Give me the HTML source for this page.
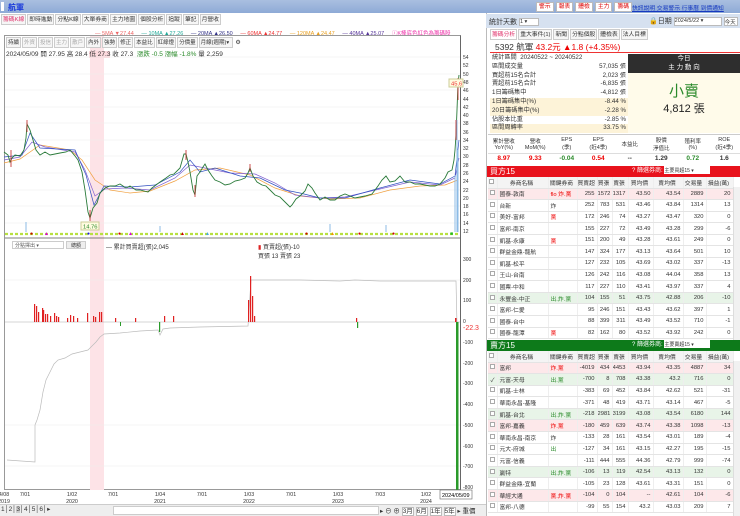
<!DOCTYPE html>
<html><head><meta charset="utf-8">
<style>
*{box-sizing:border-box;margin:0;padding:0}
body{width:740px;height:516px;overflow:hidden;background:#fff;font-family:"Liberation Sans","Noto Sans CJK TC",sans-serif;font-size:7px;color:#333;position:relative}
.abs{position:absolute}
.topbar{left:0;top:0;width:740px;height:13px;background:linear-gradient(#a9bfe0,#8eaad6)}
.tabs span{display:inline-block;border:1px solid #ccc;background:#f6f6f6;padding:1px 1px;margin-right:1px;font-size:5.8px;height:11px;line-height:8px}
.btn{display:inline-block;background:#fff;border:1px solid #bbb;color:#d00;font-size:5.8px;padding:0 2px;height:10px;line-height:9px;margin-right:2px}
table{border-collapse:collapse;table-layout:fixed}
.bt td{height:11.6px;border-bottom:1px solid #e4e4e4;border-right:1px solid #eee;font-size:5.8px;text-align:right;padding-right:2px;white-space:nowrap;overflow:hidden}
.bt td.n{text-align:left;padding-left:2px}
.bt tr.h td{background:#f4f4f4;text-align:center;height:11px}
.bt tr.pk td{background:#fde8ea}
.bt tr.gr td{background:#e8f4e8}
.cb{display:inline-block;width:5px;height:5px;border:1px solid #aaa;background:#fff}
.r{color:#e00}.g{color:#2a8a2a}
.st div{height:8.8px;line-height:8.8px;font-size:6.2px;padding:0 2px;display:flex;justify-content:space-between}
</style></head><body>
<div class="abs topbar"></div>
<div class="abs" style="left:1px;top:2px;width:3px;height:9px;background:#fff"></div>
<div class="abs" style="left:8px;top:2px;font-size:8px;color:#1a3adb;font-weight:bold">航軍</div>
<div class="abs" style="left:536px;top:2px;white-space:nowrap"><span class="btn">警示</span><span class="btn">報表</span><span class="btn">體檢</span><span class="btn">主力</span><span class="btn">籌碼</span></div>
<div class="abs" style="left:632px;top:3px;font-size:5.8px;color:#1538c0;text-decoration:underline;white-space:nowrap">快訊說明 交易警示 行事曆 到價通知</div>

<div class="abs tabs" style="left:1px;top:14px;white-space:nowrap"><span style="color:#e0306a">籌碼K線</span><span>即時進動</span><span>分點K線</span><span>大單券商</span><span>主力地圖</span><span>個股分析</span><span>追蹤</span><span>筆記</span><span>月營收</span></div>

<div class="abs" style="left:95px;top:29px;font-size:5.5px;white-space:nowrap;color:#333">
<span style="color:#e66">— 5MA ▼27.44</span>&nbsp;&nbsp;&nbsp;&nbsp;&nbsp;<span style="color:#2a9">— 10MA ▲27.26</span>&nbsp;&nbsp;&nbsp;&nbsp;&nbsp;<span style="color:#338">— 20MA ▲26.50</span>&nbsp;&nbsp;&nbsp;&nbsp;&nbsp;<span style="color:#e33">— 60MA ▲24.77</span>&nbsp;&nbsp;&nbsp;&nbsp;&nbsp;<span style="color:#e9a020">— 120MA ▲24.47</span>&nbsp;&nbsp;&nbsp;&nbsp;&nbsp;<span style="color:#539">— 40MA ▲25.07</span>&nbsp;&nbsp;&nbsp;&nbsp;&nbsp;<span style="color:#e3a">ⓘK棒底色紅色為籌碼股</span></div>

<div class="abs" style="left:4px;top:35px;width:457px;height:455px;border:1px solid #999;border-right:1px solid #666"></div>
<div class="abs" style="left:90px;top:36px;width:14px;height:454px;background:#fde3e7"></div>
<div class="abs tabs" style="left:6px;top:37px;white-space:nowrap;font-size:6px"><span style="font-size:5.5px">持續</span><span style="font-size:5.5px;color:#aaa">外資</span><span style="font-size:5.5px;color:#aaa">投信</span><span style="font-size:5.5px;color:#aaa">主力</span><span style="font-size:5.5px;color:#aaa">散戶</span><span style="font-size:5.5px">內外</span><span style="font-size:5.5px">強勢</span><span style="font-size:5.5px">修正</span><span style="font-size:5.5px">本益比</span><span style="font-size:5.5px">紅綠燈</span><span style="font-size:5.5px">分價量</span><span style="font-size:5.5px;width:34px">月線(週期)▾</span> ⚙</div>
<div class="abs" style="left:6px;top:48px;font-size:6.5px;white-space:nowrap">2024/05/09 開 27.95 高 28.4 <span style="background:#fcd9dd">低 27.3</span> 收 27.3 &nbsp;<span class="g">漲跌 -0.5 漲幅 -1.8%</span> 量 2,259</div>

<svg class="abs" style="left:0;top:0" width="486" height="516">
<g stroke="#eee" stroke-width="0.6">
<line x1="5" y1="57" x2="460" y2="57"/><line x1="5" y1="74" x2="460" y2="74"/><line x1="5" y1="90" x2="460" y2="90"/><line x1="5" y1="107" x2="460" y2="107"/><line x1="5" y1="123" x2="460" y2="123"/><line x1="5" y1="140" x2="460" y2="140"/><line x1="5" y1="156" x2="460" y2="156"/><line x1="5" y1="173" x2="460" y2="173"/><line x1="5" y1="190" x2="460" y2="190"/><line x1="5" y1="206" x2="460" y2="206"/><line x1="5" y1="223" x2="460" y2="223"/>
<line x1="5" y1="280" x2="460" y2="280"/><line x1="5" y1="425" x2="460" y2="425"/><line x1="5" y1="466" x2="460" y2="466"/>
</g>
<g font-size="5" fill="#333">
<text x="463" y="59">54</text><text x="463" y="67">52</text><text x="463" y="76">50</text><text x="463" y="84">48</text><text x="463" y="92">46</text><text x="463" y="101">44</text><text x="463" y="109">42</text><text x="463" y="117">40</text><text x="463" y="125">38</text><text x="463" y="134">36</text><text x="463" y="142">34</text><text x="463" y="150">32</text><text x="463" y="158">30</text><text x="463" y="167">28</text><text x="463" y="175">26</text><text x="463" y="183">24</text><text x="463" y="192">22</text><text x="463" y="200">20</text><text x="463" y="208">18</text><text x="463" y="216">16</text><text x="463" y="225">14</text><text x="463" y="233">12</text>
<text x="463" y="261">300</text><text x="463" y="282">200</text><text x="463" y="302">100</text><text x="463" y="323">0</text><text x="463" y="344">-100</text><text x="463" y="365">-200</text><text x="463" y="385">-300</text><text x="463" y="406">-400</text><text x="463" y="427">-500</text><text x="463" y="448">-600</text><text x="463" y="468">-700</text><text x="463" y="489">-800</text>
</g>
<polyline fill="none" stroke="#f0a040" stroke-width="0.7" points="4,163 20,159 40,145 70,150 82,160 95,180 110,190 130,193 150,191 175,181 195,170 220,168 250,175 275,188 300,196 330,199 360,198 390,190 420,186 445,185 458,180"/>
<polyline fill="none" stroke="#8060d0" stroke-width="0.7" points="4,160 20,157 32,142 45,147 75,152 85,170 95,196 105,189 125,188 150,190 175,178 190,165 205,168 230,173 255,174 275,183 295,195 320,198 345,197 380,189 410,182 440,185 455,178 459,158"/>
<polyline fill="none" stroke="#3050c0" stroke-width="0.7" points="4,157 22,155 30,133 40,148 75,150 86,175 94,205 104,186 130,187 155,185 180,172 190,160 200,172 215,168 240,176 260,178 285,190 300,193 320,198 345,198 380,188 410,180 440,184 455,176 459,140"/>
<polyline fill="none" stroke="#2a7a3a" stroke-width="0.9" points="4,152 8,155 10,162 12,158 15,155 20,156 24,150 26,138 27,124 30,130 33,140 36,150 40,155 45,152 50,155 55,154 60,153 66,152 70,150 75,156 78,160 82,172 85,190 88,212 90,218 93,208 97,203 100,193 105,188 110,186 115,186 120,184 126,188 130,186 136,190 140,190 148,192 152,188 156,185 160,182 166,178 170,175 174,174 180,168 184,154 186,154 188,162 190,172 193,190 195,195 197,176 200,172 203,167 205,164 208,170 212,176 215,180 220,182 225,185 230,184 235,181 240,180 245,178 248,173 250,168 253,176 257,182 262,185 266,186 270,190 275,195 280,197 285,202 290,207 292,205 296,199 300,196 305,191 308,184 312,188 315,193 320,200 325,197 330,200 335,200 340,196 345,194 350,196 355,198 360,197 365,196 372,194 378,186 382,180 386,176 390,182 395,181 400,176 405,182 410,182 415,184 420,184 425,185 430,186 435,186 440,184 445,178 448,172 452,170 454,160 455,150 456,135 457,110 458,84 459,75"/>
<g stroke="#c02020" stroke-width="0.8">
<line x1="11" y1="150" x2="11" y2="167"/><line x1="27" y1="120" x2="27" y2="132"/><line x1="90" y1="210" x2="90" y2="221"/><line x1="186" y1="150" x2="186" y2="160"/><line x1="195" y1="185" x2="195" y2="197"/><line x1="250" y1="164" x2="250" y2="172"/><line x1="456" y1="120" x2="456" y2="140"/><line x1="458" y1="78" x2="458" y2="100"/>
</g>
<rect x="81" y="222" width="18" height="8" fill="#fffbe0" stroke="#cc9"/><text x="83" y="228.5" font-size="5.8" fill="#2a8a2a">14.76</text>
<rect x="449" y="79" width="14" height="8" fill="#fffbe0" stroke="#cc9"/><text x="451" y="85.5" font-size="5.8" fill="#e33">45.6</text>
<g stroke="#8cbbe6" stroke-width="1"><line x1="26" y1="232" x2="26" y2="222"/><line x1="160" y1="232" x2="160" y2="226"/><line x1="330" y1="232" x2="330" y2="224"/><line x1="386" y1="232" x2="386" y2="225"/><line x1="455" y1="232" x2="455" y2="175"/><line x1="457" y1="232" x2="457" y2="120"/><line x1="458" y1="232" x2="458" y2="150"/></g>
<line x1="5" y1="234" x2="460" y2="234" stroke="#b8e040" stroke-width="2.2" stroke-dasharray="3,2"/>
<g font-size="5"><text x="30" y="235" fill="#c00">●</text><text x="44" y="235" fill="#d0d">▲</text><text x="87" y="235" fill="#22c">●</text><text x="118" y="235" fill="#c00">●</text><text x="128" y="235" fill="#d0d">▲</text><text x="180" y="235" fill="#c00">▲</text><text x="205" y="235" fill="#4ad">▲</text><text x="305" y="235" fill="#c00">●</text><text x="330" y="235" fill="#e90">▲</text><text x="358" y="235" fill="#c00">●</text><text x="392" y="235" fill="#c00">●</text><text x="450" y="235" fill="#2b2">■</text></g>
<line x1="5" y1="238" x2="460" y2="238" stroke="#555" stroke-width="0.8"/>
<line x1="5" y1="322" x2="460" y2="322" stroke="#aaa" stroke-width="0.6"/>
<polyline fill="none" stroke="#bbb" stroke-width="0.7" points="7,460 35,462 35,425 37,420 40,410 43,392 46,380 50,372 54,364 58,360 65,358 72,354 80,352 88,350 92,346 96,342 100,337 104,334 120,333 140,331 158,330 160,335 163,329 170,328 200,327 248,326 251,280 255,280 300,280 340,281 355,280 380,281 440,281 456,281 457,326"/>
<g fill="#e02020">
<rect x="34" y="304" width="1.2" height="18"/><rect x="36" y="306" width="1.2" height="16"/><rect x="38" y="312" width="1.2" height="10"/><rect x="42" y="308" width="1.2" height="14"/><rect x="43" y="310" width="1.2" height="12"/><rect x="45" y="314" width="1.2" height="8"/><rect x="47" y="314" width="1.2" height="8"/><rect x="50" y="316" width="1.2" height="6"/><rect x="54" y="313" width="1.2" height="9"/><rect x="56" y="316" width="1.2" height="6"/><rect x="58" y="317" width="1.2" height="5"/><rect x="67" y="318" width="1.2" height="4"/><rect x="70" y="315" width="1.2" height="7"/><rect x="73" y="316" width="1.2" height="6"/><rect x="77" y="318" width="1.2" height="4"/><rect x="87" y="313" width="1.2" height="9"/><rect x="93" y="316" width="1.2" height="6"/><rect x="95" y="317" width="1.2" height="5"/><rect x="99" y="312" width="1.2" height="10"/><rect x="101" y="312" width="1.2" height="10"/><rect x="115" y="318" width="1.2" height="4"/><rect x="135" y="318" width="1.2" height="4"/><rect x="164" y="316" width="1.2" height="6"/><rect x="173" y="316" width="1.2" height="6"/><rect x="248" y="300" width="1.2" height="22"/><rect x="250" y="276" width="1.2" height="46"/><rect x="252" y="296" width="1.2" height="26"/><rect x="254" y="316" width="1.2" height="6"/><rect x="356" y="318" width="1.2" height="4"/><rect x="455" y="318" width="1.5" height="4"/></g>
<g fill="#2a9a2a"><rect x="120" y="322" width="1" height="4"/><rect x="159" y="322" width="1.2" height="10"/><rect x="357" y="322" width="1.2" height="6"/><rect x="456" y="322" width="2.5" height="168"/></g>
<text x="463" y="330" font-size="7" fill="#e33">-22.3</text>
<g font-size="5.3" fill="#333" text-anchor="middle"><text x="4" y="496">4/08</text><text x="4" y="503">2019</text><text x="25" y="496">7/01</text><text x="72" y="496">1/02</text><text x="72" y="503">2020</text><text x="113" y="496">7/01</text><text x="160" y="496">1/04</text><text x="160" y="503">2021</text><text x="202" y="496">7/01</text><text x="249" y="496">1/03</text><text x="249" y="503">2022</text><text x="291" y="496">7/01</text><text x="338" y="496">1/03</text><text x="338" y="503">2023</text><text x="380" y="496">7/03</text><text x="426" y="496">1/02</text><text x="426" y="503">2024</text></g>
<rect x="440" y="490" width="32" height="9" fill="#fff" stroke="#666" stroke-width="0.6"/><text x="442" y="497" font-size="5.5">2024/05/09</text>
</svg>
<div class="abs" style="left:12px;top:241px;width:52px;height:8px;border:1px solid #ccc;font-size:5px;color:#555;padding-left:2px">分點擇出 ▾</div>
<div class="abs" style="left:66px;top:241px;width:20px;height:8px;border:1px solid #ccc;background:#eee;font-size:5px;text-align:center">總額</div>
<div class="abs" style="left:106px;top:242px;font-size:6px">— 累計買賣超(張)2,045</div>
<div class="abs" style="left:258px;top:242px;font-size:6px"><span style="color:#d22">▮</span> 買賣超(張)-10<br>買張 13 賣張 23</div>

<div class="abs" style="left:0;top:504px;width:486px;height:12px;background:#eee;border-top:1px solid #ccc"></div>
<div class="abs" style="left:1px;top:505px;font-size:6.5px;white-space:nowrap">1│2│<span style="background:#ccc">3</span>│4│5│6│▸</div>
<div class="abs" style="left:113px;top:506px;width:266px;height:9px;background:#fff;border:1px solid #ccc"></div>
<div class="abs" style="left:380px;top:505px;font-size:6.5px;white-space:nowrap">▸ ⊖ ⊕ <span style="border:1px solid #bbb;background:#fff">3月</span> <span style="border:1px solid #bbb;background:#fff">6月</span> <span style="border:1px solid #bbb;background:#fff">1年</span> <span style="border:1px solid #bbb;background:#fff">5年</span> ▸ 重價</div>

<div class="abs" style="left:486px;top:13px;width:254px;height:503px;border-left:1px solid #bbb"></div>
<div class="abs" style="left:486px;top:14px;width:254px;height:14px;background:#d6e1f0"></div>
<div class="abs" style="left:489px;top:17px;font-size:7px;white-space:nowrap">統計天數 <span style="display:inline-block;width:20px;height:8px;background:#fff;border:1px solid #bbb;font-size:5.5px;vertical-align:middle">1 ▾</span></div>
<div class="abs" style="left:649px;top:16px;font-size:7px;white-space:nowrap">🔒日期 <span style="display:inline-block;width:48px;height:9px;background:#fff;border:1px solid #bbb;font-size:5.5px;vertical-align:middle">2024/5/22 ▾</span> <span style="display:inline-block;width:14px;height:9px;background:#fff;border:1px solid #bbb;font-size:5.5px;vertical-align:middle">今天</span></div>
<div class="abs tabs" style="left:490px;top:29px;white-space:nowrap"><span style="color:#e0306a;background:#fff">籌碼分析</span><span>重大事件(1)</span><span>新聞</span><span>分點個股</span><span>體檢表</span><span>法人目標</span></div>
<div class="abs" style="left:490px;top:41px;width:250px;height:12px;border-bottom:1px solid #e33;font-size:8.5px;white-space:nowrap;padding-left:5px">5392 航軍 <span class="r">43.2元 ▲1.8 (+4.35%)</span></div>
<div class="abs st" style="left:490px;top:54px;width:138px">
<div><span>統計區間 &nbsp;20240522 ~ 20240522</span></div>
<div><span>區間成交量</span><span>57,035 張</span></div>
<div><span>買超前15名合計</span><span>2,023 張</span></div>
<div><span>賣超前15名合計</span><span>-6,835 張</span></div>
<div><span>1日籌碼集中</span><span>-4,812 張</span></div>
<div style="background:#fdf3d8"><span>1日籌碼集中(%)</span><span>-8.44 %</span></div>
<div style="background:#fdf3d8"><span>20日籌碼集中(%)</span><span>-2.28 %</span></div>
<div><span>佔股本比重</span><span>-2.85 %</span></div>
<div style="background:#fdf3d8"><span>區間周轉率</span><span>33.75 %</span></div>
</div>
<div class="abs" style="left:628px;top:54px;width:112px;height:19px;background:#2e2e2e;color:#fff;font-size:6.5px;text-align:center;line-height:9px">今日<br>主 力 動 向</div>
<div class="abs" style="left:628px;top:73px;width:112px;height:60px;background:#fffbea;text-align:center"><div style="font-size:15px;color:#2a8a2a;margin-top:11px;line-height:16px">小賣</div><div style="font-size:11px;color:#222">4,812 張</div></div>
<table class="abs" style="left:488px;top:134px;width:252px;font-size:5.5px;text-align:center">
<tr style="height:19px;border-top:1px solid #ccc;border-bottom:1px solid #ddd"><td>累計營收<br>YoY(%)</td><td>營收<br>MoM(%)</td><td>EPS<br>(季)</td><td>EPS<br>(近4季)</td><td>本益比</td><td>股價<br>淨值比</td><td>殖利率<br>(%)</td><td>ROE<br>(近4季)</td></tr>
<tr style="height:10px;font-size:6.5px;font-weight:bold"><td class="r">8.97</td><td class="r">9.33</td><td class="g">-0.04</td><td class="r">0.54</td><td>--</td><td>1.29</td><td class="g">0.72</td><td>1.6</td></tr>
</table>

<div class="abs" style="left:487px;top:166px;width:253px;height:11px;background:#e8121c;color:#fff;font-size:8px;line-height:11px;padding-left:3px">買方15<span style="position:absolute;left:145px;font-size:6px">? 篩選券商: <span style="display:inline-block;width:46px;height:8px;background:#fff;color:#333;font-size:5px;vertical-align:middle">主要買超15 ▾</span></span></div>
<table class="abs bt" style="left:488px;top:177px;width:245px">
<colgroup><col style="width:9px"><col style="width:51px"><col style="width:29px"><col style="width:20px"><col style="width:15px"><col style="width:16px"><col style="width:25px"><col style="width:30px"><col style="width:23px"><col style="width:27px"></colgroup>
<tr class="h"><td><span class="cb"></span></td><td>券商名稱</td><td>關鍵券商</td><td>買賣超</td><td>買張</td><td>賣張</td><td>買均價</td><td>賣均價</td><td>交易量</td><td>損益(萬)</td></tr>
<tr class="pk"><td><span class="cb"></span></td><td class="n">國泰-敦南</td><td class="n r">flo 炸.黨</td><td>255</td><td>1572</td><td>1317</td><td>43.50</td><td>43.54</td><td>2889</td><td>20</td></tr>
<tr><td><span class="cb"></span></td><td class="n">台新</td><td class="n">炸</td><td>252</td><td>783</td><td>531</td><td>43.46</td><td>43.84</td><td>1314</td><td>13</td></tr>
<tr><td><span class="cb"></span></td><td class="n">美好-富邦</td><td class="n r">黨</td><td>172</td><td>246</td><td>74</td><td>43.27</td><td>43.47</td><td>320</td><td>0</td></tr>
<tr><td><span class="cb"></span></td><td class="n">富邦-南京</td><td></td><td>155</td><td>227</td><td>72</td><td>43.49</td><td>43.28</td><td>299</td><td>-6</td></tr>
<tr><td><span class="cb"></span></td><td class="n">凱基-永康</td><td class="n r">黨</td><td>151</td><td>200</td><td>49</td><td>43.28</td><td>43.61</td><td>249</td><td>0</td></tr>
<tr><td><span class="cb"></span></td><td class="n">群益金鼎-龍航</td><td></td><td>147</td><td>324</td><td>177</td><td>43.13</td><td>43.64</td><td>501</td><td>10</td></tr>
<tr><td><span class="cb"></span></td><td class="n">凱基-松平</td><td></td><td>127</td><td>232</td><td>105</td><td>43.69</td><td>43.02</td><td>337</td><td>-13</td></tr>
<tr><td><span class="cb"></span></td><td class="n">王山-台南</td><td></td><td>126</td><td>242</td><td>116</td><td>43.08</td><td>44.04</td><td>358</td><td>13</td></tr>
<tr><td><span class="cb"></span></td><td class="n">國票-中和</td><td></td><td>117</td><td>227</td><td>110</td><td>43.41</td><td>43.97</td><td>337</td><td>4</td></tr>
<tr class="gr"><td><span class="cb"></span></td><td class="n">永豐金-中正</td><td class="n g">出.炸.黨</td><td>104</td><td>155</td><td>51</td><td>43.75</td><td>42.88</td><td>206</td><td>-10</td></tr>
<tr><td><span class="cb"></span></td><td class="n">富邦-仁愛</td><td></td><td>95</td><td>246</td><td>151</td><td>43.43</td><td>43.62</td><td>397</td><td>1</td></tr>
<tr><td><span class="cb"></span></td><td class="n">國泰-台中</td><td></td><td>88</td><td>399</td><td>311</td><td>43.49</td><td>43.52</td><td>710</td><td>-1</td></tr>
<tr><td><span class="cb"></span></td><td class="n">國泰-龍潭</td><td class="n r">黨</td><td>82</td><td>162</td><td>80</td><td>43.52</td><td>43.92</td><td>242</td><td>0</td></tr>
</table>
<div class="abs" style="left:733px;top:187px;width:7px;height:153px;background:#f1f1f1;border-left:1px solid #ddd"></div>

<div class="abs" style="left:487px;top:340px;width:253px;height:11px;background:#0d7a1a;color:#fff;font-size:8px;line-height:11px;padding-left:3px">賣方15<span style="position:absolute;left:145px;font-size:6px">? 篩選券商: <span style="display:inline-block;width:46px;height:8px;background:#fff;color:#333;font-size:5px;vertical-align:middle">主要賣超15 ▾</span></span></div>
<table class="abs bt" style="left:488px;top:351px;width:245px">
<colgroup><col style="width:9px"><col style="width:51px"><col style="width:29px"><col style="width:20px"><col style="width:15px"><col style="width:16px"><col style="width:25px"><col style="width:30px"><col style="width:23px"><col style="width:27px"></colgroup>
<tr class="h"><td><span class="cb"></span></td><td>券商名稱</td><td>關鍵券商</td><td>買賣超</td><td>買張</td><td>賣張</td><td>買均價</td><td>賣均價</td><td>交易量</td><td>損益(萬)</td></tr>
<tr class="pk"><td><span class="cb"></span></td><td class="n">富邦</td><td class="n r">炸.黨</td><td>-4019</td><td>434</td><td>4453</td><td>43.94</td><td>43.35</td><td>4887</td><td>34</td></tr>
<tr class="gr"><td>✓</td><td class="n">元富-天母</td><td class="n g">出.黨</td><td>-700</td><td>8</td><td>708</td><td>43.38</td><td>43.2</td><td>716</td><td>0</td></tr>
<tr><td><span class="cb"></span></td><td class="n">凱基-士林</td><td></td><td>-383</td><td>69</td><td>452</td><td>43.84</td><td>42.62</td><td>521</td><td>-31</td></tr>
<tr><td><span class="cb"></span></td><td class="n">華南永昌-基隆</td><td></td><td>-371</td><td>48</td><td>419</td><td>43.71</td><td>43.14</td><td>467</td><td>-5</td></tr>
<tr class="gr"><td><span class="cb"></span></td><td class="n">凱基-台北</td><td class="n g">出.炸.黨</td><td>-218</td><td>2981</td><td>3199</td><td>43.08</td><td>43.54</td><td>6180</td><td>144</td></tr>
<tr class="pk"><td><span class="cb"></span></td><td class="n">富邦-嘉義</td><td class="n r">炸.黨</td><td>-180</td><td>459</td><td>639</td><td>43.74</td><td>43.38</td><td>1098</td><td>-13</td></tr>
<tr><td><span class="cb"></span></td><td class="n">華南永昌-南京</td><td class="n">炸</td><td>-133</td><td>28</td><td>161</td><td>43.54</td><td>43.01</td><td>189</td><td>-4</td></tr>
<tr><td><span class="cb"></span></td><td class="n">元大-府城</td><td class="n g">出</td><td>-127</td><td>34</td><td>161</td><td>43.15</td><td>42.27</td><td>195</td><td>-15</td></tr>
<tr><td><span class="cb"></span></td><td class="n">元富-信義</td><td></td><td>-111</td><td>444</td><td>555</td><td>44.36</td><td>42.79</td><td>999</td><td>-74</td></tr>
<tr class="gr"><td><span class="cb"></span></td><td class="n">贏特</td><td class="n g">出.炸.黨</td><td>-106</td><td>13</td><td>119</td><td>42.54</td><td>43.13</td><td>132</td><td>0</td></tr>
<tr><td><span class="cb"></span></td><td class="n">群益金鼎-宜蘭</td><td></td><td>-105</td><td>23</td><td>128</td><td>43.61</td><td>43.31</td><td>151</td><td>0</td></tr>
<tr class="pk"><td><span class="cb"></span></td><td class="n">華經大通</td><td class="n r">黨.炸.黨</td><td>-104</td><td>0</td><td>104</td><td>--</td><td>42.61</td><td>104</td><td>-6</td></tr>
<tr><td><span class="cb"></span></td><td class="n">富邦-八德</td><td></td><td>-99</td><td>55</td><td>154</td><td>43.2</td><td>43.03</td><td>209</td><td>7</td></tr>
</table>
<div class="abs" style="left:733px;top:361px;width:7px;height:155px;background:#f1f1f1;border-left:1px solid #ddd"></div>
</body></html>
